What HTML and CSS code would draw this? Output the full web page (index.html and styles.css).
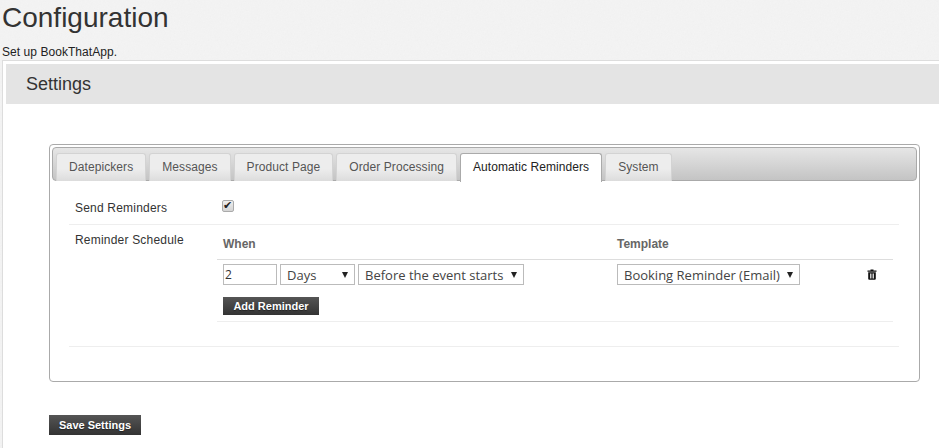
FILE: index.html
```html
<!DOCTYPE html>
<html>
  <head>
    <meta charset="utf-8" />
    <title>Configuration</title>
    <link rel="stylesheet" href="styles.css">
  </head>
  <body>
    <div class="page-head">
      <h1>Configuration</h1>
      <p>Set up BookThatApp.</p>
    </div>

    <div class="panel">
      <div class="panel-title">
        <h2>Settings</h2>
      </div>

      <div class="panel-body">
        <div class="tabs">
          <ul class="tab-buttons">
            <li class="tab-button">Datepickers</li>
            <li class="tab-button">Messages</li>
            <li class="tab-button">Product Page</li>
            <li class="tab-button">Order Processing</li>
            <li class="tab-button active">Automatic Reminders</li>
            <li class="tab-button">System</li>
          </ul>

          <div class="tab-content">
            <div class="field field-send">
              <label class="field-label" for="sendReminders">Send Reminders</label>
              <input type="checkbox" id="sendReminders" checked />
            </div>

            <div class="field field-schedule">
              <div class="field-label">Reminder Schedule</div>
              <div class="schedule">
                <div class="schedule-row schedule-head">
                  <div>When</div>
                  <div>Template</div>
                </div>
                <div class="schedule-row schedule-item">
                  <div class="when">
                    <input type="text" class="amount" value="2" />
                    <span class="select select-unit">Days</span>
                    <span class="select select-moment">Before the event starts</span>
                  </div>
                  <div class="template">
                    <span class="select select-template">Booking Reminder (Email)</span>
                    <svg class="trash" width="10" height="11" viewBox="0 0 10 11">
                      <path d="M3.5 0.5h3v1h3v1.2h-9V1.500h3z" fill="#111" />
                      <path fill-rule="evenodd" d="M1.200 3.200h7.600v6.600q0 1-1 1H2.200q-1 0-1-1zM3 4.500v5h0.800v-5zM4.600 4.500v5h0.800v-5zM6.200 4.500v5H7v-5z" fill="#111" />
                    </svg>
                  </div>
                </div>
                <div class="schedule-add">
                  <button class="button-dark button-add">Add Reminder</button>
                </div>
              </div>
            </div>
          </div>
        </div>

        <button class="button-dark button-save">Save Settings</button>
      </div>
    </div>
  </body>
</html>
```

FILE: styles.css
```css
html {
  overflow: hidden;
}
body {
  margin: 0;
  height: 448px;
  overflow: hidden;
  background-color: #f5f5f5;
  background-image: url("data:image/svg+xml,%3Csvg xmlns='http://www.w3.org/2000/svg' width='200' height='200'%3E%3Cfilter id='n'%3E%3CfeTurbulence type='fractalNoise' baseFrequency='.7' numOctaves='2'/%3E%3CfeColorMatrix values='0 0 0 0 .5 0 0 0 0 .5 0 0 0 0 .5 0 0 0 .1 0'/%3E%3C/filter%3E%3Crect width='200' height='200' filter='url(%23n)'/%3E%3C/svg%3E");
  font-family: "Liberation Sans", Arial, sans-serif;
  font-size: 12px;
  color: #333;
}
.page-head {
  padding: 0 2px;
  height: 60px;
}
.page-head h1 {
  margin: 0;
  padding: 2px 0 0 0;
  font-size: 28px;
  line-height: 32px;
  font-weight: normal;
  color: #333;
}
.page-head p {
  margin: 0;
  padding-top: 11px;
  font-size: 12px;
  line-height: 14px;
  letter-spacing: 0.05px;
  color: #222;
}
.panel {
  margin-left: 2px;
  padding: 3px 0 0 3px;
  height: 387px;
  border-top: 1px solid #ddd;
  border-left: 1px solid #ddd;
  background-color: #fff;
}
.panel-title {
  height: 40px;
  padding-left: 20px;
  background-color: #e4e4e4;
}
.panel-title h2 {
  margin: 0;
  font-size: 18px;
  line-height: 40px;
  font-weight: normal;
  color: #333;
}
.panel-body {
  padding: 40px 0 0 43px;
}
.tabs {
  width: 865px;
  height: 232px;
  padding: 2px;
  border: 1px solid #aaa;
  border-radius: 4px;
}
.tab-buttons {
  display: flex;
  gap: 3px;
  height: 34px;
  margin: 0;
  padding: 5px 0 0 3px;
  box-sizing: border-box;
  list-style: none;
  border: 1px solid #aaa;
  border-radius: 4px;
  background: linear-gradient(#e6e6e6, #c4c4c4);
}
.tab-button {
  height: 27px;
  padding: 0 12px;
  line-height: 27px;
  letter-spacing: 0.08px;
  border: 1px solid #d3d3d3;
  border-bottom: none;
  border-radius: 3px 3px 0 0;
  background: linear-gradient(#ededed 55%, #dcdcdc);
  color: #555;
}
.tab-button.active {
  height: 28px;
  border-color: #aaa;
  background: #fff;
  color: #222;
}
.tab-content {
  padding: 0 18px 0 17px;
}
.field {
  display: flex;
  border-bottom: 1px solid #eee;
}
.field-label {
  width: 148px;
  padding-left: 6px;
  letter-spacing: 0.2px;
  color: #333;
}
.field-send {
  height: 43px;
  align-items: flex-start;
}
.field-send .field-label {
  padding-top: 20px;
}
input[type="checkbox"] {
  appearance: none;
  position: relative;
  width: 12px;
  height: 12px;
  box-sizing: border-box;
  margin: 19px 0 0 -1px;
  border: 1px solid #aaa;
  border-radius: 2px;
  background: linear-gradient(#eee, #d4d4d4);
}
input[type="checkbox"]::after {
  content: "\2714";
  position: absolute;
  top: -1px;
  left: 0;
  font-family: "DejaVu Sans", sans-serif;
  font-size: 11px;
  line-height: 11px;
  color: #222;
}
.field-schedule {
  height: 121px;
}
.field-schedule .field-label {
  padding-top: 8px;
}
.schedule {
  width: 676px;
  margin-left: -6px;
}
.schedule-row {
  display: flex;
  padding: 0 6px;
}
.schedule-head {
  height: 30px;
  padding-top: 4px;
  align-items: center;
  border-bottom: 1px solid #ddd;
  font-weight: bold;
  color: #666;
}
.schedule-row > div:first-child {
  width: 394px;
}
.schedule-item {
  padding-top: 4px;
  height: 27px;
}
.when,
.template {
  display: flex;
  gap: 3px;
  align-items: flex-start;
}
.template {
  flex: 1;
  position: relative;
}
input[type="text"].amount {
  width: 54px;
  height: 21px;
  box-sizing: border-box;
  margin: 0;
  padding: 0 1px;
  border: 1px solid #bbb;
  font-family: "Open Sans", sans-serif;
  font-size: 12px;
  color: #333;
}
.select {
  position: relative;
  display: block;
  height: 21px;
  box-sizing: border-box;
  padding-left: 6px;
  border: 1px solid #bbb;
  background-color: #fff;
  font-family: "Open Sans", sans-serif;
  font-size: 13px;
  line-height: 21px;
  color: #444;
}
.select::after {
  content: "";
  position: absolute;
  top: 7px;
  right: 6px;
  border-left: 3.5px solid transparent;
  border-right: 3.5px solid transparent;
  border-top: 6px solid #222;
}
.select-unit {
  width: 75px;
}
.select-moment {
  width: 166px;
}
.select-template {
  width: 183px;
}
.trash {
  position: absolute;
  right: 10px;
  top: 5px;
}
.schedule-add {
  height: 24px;
  padding: 6px 6px 0;
  border-bottom: 1px solid #eee;
}
.button-dark {
  display: block;
  height: 18px;
  padding: 0;
  border: none;
  background: linear-gradient(#555, #333);
  font-family: "Liberation Sans", Arial, sans-serif;
  font-size: 11px;
  font-weight: bold;
  white-space: nowrap;
  text-shadow: 0 1px 1px #222;
  color: #fff;
}
.button-add {
  width: 96px;
}
.button-save {
  width: 92px;
  height: 20px;
  margin-top: 33px;
}
```
